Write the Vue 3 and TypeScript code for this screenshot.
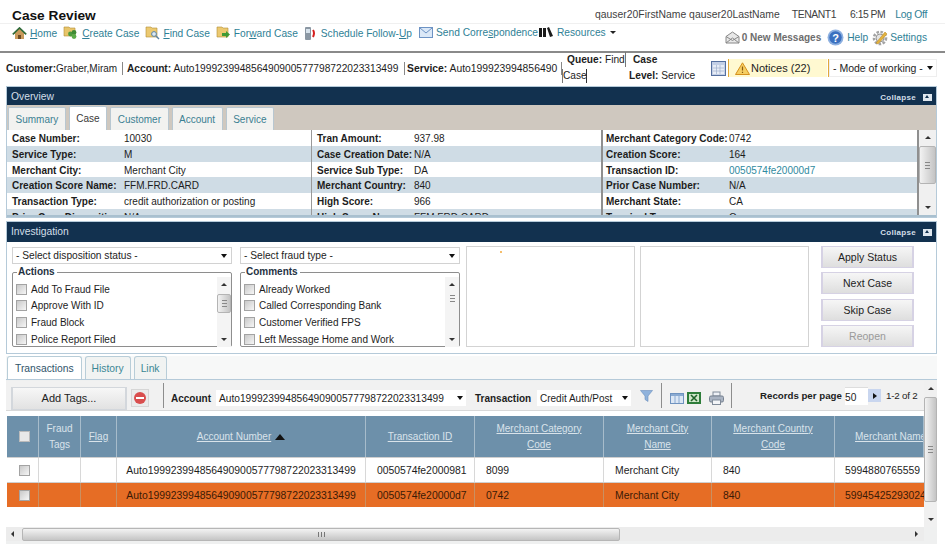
<script setup lang="ts">
const overview: [string, string, boolean?][][] = [
  [['Case Number:', '10030'], ['Tran Amount:', '937.98'], ['Merchant Category Code:', '0742']],
  [['Service Type:', 'M'], ['Case Creation Date:', 'N/A'], ['Creation Score:', '164']],
  [['Merchant City:', 'Merchant City'], ['Service Sub Type:', 'DA'], ['Transaction ID:', '0050574fe20000d7', true]],
  [['Creation Score Name:', 'FFM.FRD.CARD'], ['Merchant Country:', '840'], ['Prior Case Number:', 'N/A']],
  [['Transaction Type:', 'credit authorization or posting'], ['High Score:', '966'], ['Merchant State:', 'CA']],
  [['Prior Case Disposition:', 'N/A'], ['High Score Name:', 'FFM.FRD.CARD'], ['Terminal Type:', 'O']],
]
const tabs1 = ['Summary', 'Case', 'Customer', 'Account', 'Service']
const actions = ['Add To Fraud File', 'Approve With ID', 'Fraud Block', 'Police Report Filed']
const comments = ['Already Worked', 'Called Corresponding Bank', 'Customer Verified FPS', 'Left Message Home and Work']
const heads = [
  { t: 'Merchant Category', u: 'Code' },
  { t: 'Merchant City', u: 'Name' },
  { t: 'Merchant Country', u: 'Code' },
]
const rows = [
  { id: '0050574fe2000981', code: '8099', name: '5994880765559', picked: false },
  { id: '0050574fe20000d7', code: '0742', name: '59945425293024', picked: true },
]
const acct = 'Auto199923994856490900577798722023313499'
</script>

<template>
  <div class="page">
    <header class="top">
      <div class="title-row">
        <h1>Case Review</h1>
        <div class="user">
          <span>qauser20FirstName qauser20LastName</span>
          <span>TENANT1</span>
          <span>6:15 PM</span>
          <a>Log Off</a>
        </div>
      </div>
      <div class="nav-row">
        <nav class="nav">
          <a class="w-home"><svg width="15" height="13" viewBox="0 0 15 13"><path d="M7.500 1 1 7h2v5h9V7h2z" fill="#c99a5c"/><path d="M.8 7.300 7.500 1l6.700 6.300" fill="none" stroke="#2f6b3a" stroke-width="1.700"/><rect x="6" y="8" width="3" height="4" fill="#6b4a24"/></svg><span><u>H</u>ome</span></a>
          <a class="w-create"><svg width="15" height="14" viewBox="0 0 15 14"><path d="M1 1h5l1 1h5v8H1z" fill="#e8c56a" stroke="#b28d37" stroke-width=".6"/><circle cx="7.500" cy="8" r="2.400" fill="#4c9a3e"/><circle cx="11" cy="6.500" r="2.400" fill="#3f8a35"/><circle cx="11" cy="10.500" r="2.400" fill="#5bab48"/></svg><span><u>C</u>reate Case</span></a>
          <a class="w-find"><svg width="15" height="14" viewBox="0 0 15 14"><path d="M1 1h5l1 1h5v9H1z" fill="#ecc970" stroke="#b28d37" stroke-width=".6"/><circle cx="9" cy="8" r="2.400" fill="#dbe9f4" stroke="#5a83a6"/><path d="m11 10 3 3" stroke="#5a83a6" stroke-width="1.400"/></svg><span><u>F</u>ind Case</span></a>
          <a class="w-forward"><svg width="15" height="14" viewBox="0 0 15 14"><path d="M1 1h5l1 1h5v9H1z" fill="#ecc970" stroke="#b28d37" stroke-width=".6"/><path d="M6 7h4V5l4 3.500-4 3.500v-2H6z" fill="#3f9a35"/></svg><span>For<u>w</u>ard Case</span></a>
          <a class="w-sched"><svg width="14" height="15" viewBox="0 0 14 15"><rect x="1" y="1" width="6" height="13" rx="1" fill="#8b97a3"/><rect x="2" y="3" width="4" height="4" fill="#d8e3ec"/><path d="M9 4q2 3 0 7" fill="none" stroke="#d62020" stroke-width="2"/></svg><span>Schedule Follow-<u>U</u>p</span></a>
          <a class="w-send"><svg width="14" height="11" viewBox="0 0 14 11"><rect x=".5" y=".5" width="13" height="10" fill="#dbe8f7" stroke="#6d93c4"/><path d="m1 1 6 5 6-5" fill="none" stroke="#6d93c4"/></svg><span>Send Corre<u>s</u>pondence</span></a>
          <a class="w-res"><svg width="14" height="10" viewBox="0 0 14 10"><path d="M0 1h3v9H0zM4 1h3v9H4zM8 1l2-1 4 9-3 1z" fill="#1b1b1b"/></svg><span>Resources</span><i class="caret"></i></a>
        </nav>
        <div class="utils">
          <span class="msgs"><svg width="15" height="13" viewBox="0 0 15 13"><path d="M1 5.500 7.500 1 14 5.500V12H1z" fill="#e8e8e8" stroke="#888"/><path d="m1 12 6.500-5 6.500 5M1 5.500l6.500 4 6.500-4" fill="none" stroke="#888"/></svg>0 New Messages</span>
          <a class="help"><svg width="17" height="17" viewBox="0 0 17 17"><circle cx="8.500" cy="8.500" r="8" fill="#8db0e0"/><circle cx="8.500" cy="8.500" r="6.200" fill="#3a70c0"/><text x="8.500" y="12.500" text-anchor="middle" font-size="11" font-weight="700" fill="#fff">?</text></svg>Help</a>
          <a class="settings"><svg width="17" height="17" viewBox="0 0 17 17"><circle cx="8" cy="9" r="6" fill="none" stroke="#a3a3a3" stroke-width="2.600" stroke-dasharray="2.500 1.500"/><circle cx="8" cy="9" r="4" fill="#e2e2e2" stroke="#999"/><path d="m4 14 9-11 2 2-9 10z" fill="#e3b23f" stroke="#b5841e" stroke-width=".5"/></svg>Settings</a>
        </div>
      </div>
    </header>

    <section class="info">
      <div class="crumb c-a"><b>Customer:</b>Graber,Miram</div>
      <div class="crumb c-b"><b>Account:</b> {{ acct }}</div>
      <div class="crumb c-c"><b>Service:</b> Auto199923994856490</div>
      <div class="queue"><span class="q1"><b>Queue:</b> Find</span><span class="q2">Case</span></div>
      <div class="level"><b class="lc">Case</b><span><b>Level:</b> Service</span></div>
      <svg class="cal" width="15" height="15" viewBox="0 0 15 15"><rect x=".5" y=".5" width="14" height="14" fill="#c3cfe6" stroke="#56709f"/><rect x="2" y="4" width="11" height="9" fill="#e8edf6"/><path d="M2 7h11M2 10h11M5.500 4v9M9 4v9" stroke="#9fb0cf" stroke-width=".7"/></svg>
      <div class="notices"><svg width="15" height="13" viewBox="0 0 15 13"><path d="M7.500 .8 14.500 12.500H.5z" fill="#f6cf63" stroke="#d5901e"/><path d="M7.500 4.500v4M7.500 9.800v1.200" stroke="#8a5a10" stroke-width="1.200"/></svg>Notices (22)</div>
      <div class="mode"><span>- Mode of working -</span><i class="arrow"></i></div>
    </section>

    <section class="panel overview">
      <div class="phead"><span>Overview</span><span class="coll">Collapse<i class="collbtn"></i></span></div>
      <div class="tabbar">
        <a v-for="t in tabs1" :key="t" class="tab" :class="{ on: t === 'Case' }">{{ t }}</a>
      </div>
      <div class="ov-body">
        <div class="ov-table">
          <div v-for="(r, i) in overview" :key="i" class="ov-row" :class="{ alt: i % 2 === 1 }">
            <div v-for="(c, j) in r" :key="j" class="ov-cell" :class="'c' + j">
              <b>{{ c[0] }}</b><span :class="{ link: c[2] }">{{ c[1] }}</span>
            </div>
          </div>
        </div>
        <div class="vbar ov-bar"><i class="up"></i><div class="thumb"><em></em></div><i class="down"></i></div>
      </div>
    </section>

    <section class="panel invest">
      <div class="phead"><span>Investigation</span><span class="coll">Collapse<i class="collbtn"></i></span></div>
      <div class="inv-body">
        <div class="inv-col">
          <div class="sel"><span>- Select disposition status -</span><i class="arrow"></i></div>
          <fieldset class="fs">
            <legend>Actions</legend>
            <div class="fs-list">
              <label v-for="a in actions" :key="a"><i class="cb"></i>{{ a }}</label>
            </div>
            <div class="vbar"><i class="up"></i><div class="thumb"><em></em></div><i class="down"></i></div>
          </fieldset>
        </div>
        <div class="inv-col">
          <div class="sel"><span>- Select fraud type -</span><i class="arrow"></i></div>
          <fieldset class="fs">
            <legend>Comments</legend>
            <div class="fs-list">
              <label v-for="a in comments" :key="a"><i class="cb"></i>{{ a }}</label>
            </div>
            <div class="vbar small"><i class="up"></i><div class="thumb"><em></em></div><i class="down"></i></div>
          </fieldset>
        </div>
        <div class="box first"><i class="dot"></i></div>
        <div class="box"></div>
        <div class="btns">
          <button>Apply Status</button>
          <button>Next Case</button>
          <button>Skip Case</button>
          <button class="off">Reopen</button>
        </div>
      </div>
    </section>

    <section class="lower">
      <div class="tabs2">
        <a class="tab2 on">Transactions</a>
        <a class="tab2">History</a>
        <a class="tab2">Link</a>
      </div>
      <div class="grid-wrap">
        <div class="grid-main">
          <div class="toolbar">
            <button class="tags">Add Tags...</button>
            <span class="minus"><i></i></span>
            <span class="vsep"></span>
            <b class="tl1">Account</b>
            <div class="tsel a"><span>{{ acct }}</span><i class="arrow"></i></div>
            <b class="tl2">Transaction</b>
            <div class="tsel t"><span>Credit Auth/Post</span><i class="arrow"></i></div>
            <svg class="filter" width="13" height="12" viewBox="0 0 13 12"><path d="M.5.500h12L8 6v5.500L5 9.500V6z" fill="#8fb2dc" stroke="#6a8fbd" stroke-width=".6"/></svg>
            <span class="vsep s2"></span>
            <svg class="i-grid" width="14" height="11" viewBox="0 0 14 11"><rect x=".5" y=".5" width="13" height="10" fill="#dce7f5" stroke="#6f93c0"/><rect x="1" y="1" width="12" height="2" fill="#8aaad2"/><path d="M5 3v7M9 3v7" stroke="#8aaad2"/></svg>
            <svg class="i-xl" width="14" height="12" viewBox="0 0 14 12"><rect width="14" height="12" fill="#2e7d3a"/><rect x="2" y="2" width="10" height="8" fill="#cfe6c9"/><path d="m4 3 6 6M10 3 4 9" stroke="#1e6329" stroke-width="1.600"/></svg>
            <svg class="i-pr" width="15" height="14" viewBox="0 0 15 14"><rect x="4" y="1" width="7" height="4" fill="#eef1f6" stroke="#808b99"/><rect x=".5" y="5" width="14" height="6" rx="1.500" fill="#a9b3c2" stroke="#768190"/><rect x="3.500" y="9" width="8" height="4.500" fill="#f3f5f8" stroke="#808b99"/></svg>
            <span class="vsep s3"></span>
            <b class="rpp">Records per page</b>
            <span class="rpp-in">50</span>
            <span class="next"><i></i></span>
            <span class="count">1-2 of 2</span>
          </div>
          <div class="tbl">
            <div class="tr th">
              <div class="cell w-a"><i class="cb head"></i></div>
              <div class="cell w-b">Fraud<br>Tags</div>
              <div class="cell w-c"><u>Flag</u></div>
              <div class="cell w-d"><u>Account Number</u><i class="sort"></i></div>
              <div class="cell w-e"><u>Transaction ID</u></div>
              <div v-for="(h, i) in heads" :key="h.t" class="cell" :class="'w-' + 'fgh'[i]"><span><u>{{ h.t }}</u><br><u>{{ h.u }}</u></span></div>
              <div class="cell w-i"><u>Merchant Name</u></div>
            </div>
            <div v-for="r in rows" :key="r.id" class="tr td" :class="{ picked: r.picked }">
              <div class="cell w-a"><i class="cb"></i></div>
              <div class="cell w-b"></div>
              <div class="cell w-c"></div>
              <div class="cell w-d">{{ acct }}</div>
              <div class="cell w-e lft">{{ r.id }}</div>
              <div class="cell w-f lft">{{ r.code }}</div>
              <div class="cell w-g lft">Merchant City</div>
              <div class="cell w-h lft">840</div>
              <div class="cell w-i lft">{{ r.name }}</div>
            </div>
          </div>
          <div class="hbar"><i class="left"></i><div class="hthumb"><em></em></div><i class="right"></i></div>
        </div>
        <div class="vbar main"><i class="up"></i><div class="thumb"><em></em></div><i class="down"></i></div>
      </div>
    </section>
  </div>
</template>

<style>
html, body { margin: 0; background: #fff; }
</style>

<style scoped>
.page { width: 946px; height: 544px; overflow: hidden; background: #fff; font-family: "Liberation Sans", Arial, sans-serif; font-size: 10px; color: #1d1d1d; display: flex; flex-direction: column; }
a { color: #2f7f96; }
.top { height: 53px; box-sizing: border-box; border-bottom: 2px solid #8a8a8a; margin-right: 1px; flex: none; }
.title-row { height: 24px; display: flex; justify-content: space-between; align-items: flex-end; padding-left: 12px; border-bottom: 1px solid #f0f0f0; box-sizing: border-box; }
h1 { margin: 0 0 -2px; font-size: 13.700px; line-height: 18px; color: #111; }
.user { display: flex; font-size: 10.400px; color: #3f3f3f; line-height: 16px; padding-right: 18px; }
.user span:nth-child(2) { margin-left: 12px; letter-spacing: -.45px; }
.user span:nth-child(3) { margin-left: 14px; letter-spacing: -.5px; }
.user a { margin-left: 10px; letter-spacing: -.3px; }
.nav-row { display: flex; justify-content: space-between; height: 27px; }
.nav { display: flex; align-items: flex-start; padding: 1px 0 0 12px; font-size: 10.200px; }
.nav a { display: flex; align-items: center; gap: 3px; height: 16px; white-space: nowrap; }
.nav a svg { flex: none; }
.nav a.w-create { margin-left: 6px; gap: 4px; } .nav a.w-find { margin-left: 6px; } .nav a.w-forward { margin-left: 6px; }
.nav a.w-sched { margin-left: 6px; gap: 3px; } .nav a.w-send { margin-left: 7px; gap: 3px; margin-top: -1px; }
.nav a.w-res { margin-left: 1px; gap: 4px; margin-top: -1px; }
.caret { width: 0; height: 0; border: 3px solid transparent; border-top: 3px solid #222; border-bottom: 0; margin-left: 0; }
.utils { display: flex; align-items: center; height: 25px; padding: 2px 18px 0 0; font-size: 10.200px; box-sizing: border-box; }
.msgs, .help, .settings { display: flex; align-items: center; gap: 2px; }
.msgs { color: #6d6d6d; font-weight: 700; font-size: 10px; }
.help { margin-left: 6px; gap: 3px; } .settings { margin-left: 4px; gap: 1px; }
.info { height: 33px; box-sizing: border-box; padding: 0 0 3px 6px; display: flex; align-items: center; font-size: 10.200px; white-space: nowrap; flex: none; }
.crumb { box-sizing: border-box; height: 13px; line-height: 13px; flex: none; }
.c-a { width: 116px; font-size: 10px; }
.c-b { width: 282px; border-left: 1px solid #888; padding-left: 4px; }
.c-c { width: 158px; border-left: 1px solid #888; border-right: 1px solid #888; padding-left: 2px; font-size: 10.350px; }
.queue { width: 67px; height: 32px; display: flex; flex-direction: column; flex: none; }
.q1 { padding-left: 5px; border-right: 1px solid #777; width: 64px; box-sizing: border-box; height: 15px; line-height: 15px; }
.q2 { border-left: 1px solid #777; border-right: 1px solid #333; width: 25px; box-sizing: border-box; line-height: 14px; margin-top: 2px; }
.level { width: 82px; height: 32px; display: flex; flex-direction: column; line-height: 16px; flex: none; }
.lc { padding-left: 4px; }
.cal { flex: none; }
.notices { margin-left: 2px; width: 99px; height: 18px; box-sizing: border-box; border-left: 1px solid #e2a93b; background: #fff9d1; display: flex; align-items: center; gap: 1px; padding-left: 6px; font-size: 11px; flex: none; }
.mode { margin-left: 1px; width: 109px; height: 18px; box-sizing: border-box; border-left: 1px solid #e2a93b; background: #fff; display: flex; align-items: center; justify-content: space-between; padding: 0 4px; box-shadow: inset 0 0 0 1px #eee; flex: none; font-size: 10.500px; }
.arrow { width: 0; height: 0; border: 3.500px solid transparent; border-top: 4px solid #111; border-bottom: 0; flex: none; }
.panel { margin: 0 9px 0 6px; border: 1px solid #b5cad9; flex: none; background: #fff; box-sizing: border-box; }
.overview { height: 132px; }
.invest { height: 133px; margin-top: 3px; }
.phead { height: 18px; background: #12314f; color: #d3dfe8; display: flex; align-items: center; justify-content: space-between; padding: 0 4px; box-sizing: border-box; font-size: 10.300px; }
.invest .phead { height: 20px; padding-bottom: 2px; }
.coll { display: flex; align-items: center; font-size: 8px; font-weight: 700; letter-spacing: .3px; margin-top: 3px; }
.collbtn { width: 9px; height: 7px; background: #dfe7ee; margin-left: 7px; position: relative; }
.collbtn::after { content: ""; position: absolute; left: 2px; top: 1px; border: 2.500px solid transparent; border-bottom: 3px solid #12314f; border-top: 0; }
.tabbar { height: 25px; background: #cfc8bf; display: flex; align-items: flex-end; padding-left: 1px; gap: 3px; box-sizing: border-box; }
.tab { height: 23px; box-sizing: border-box; padding: 0 6.500px; background: #f2f2f0; border: 1px solid #b8c7d1; border-bottom: 0; display: flex; align-items: center; font-size: 10px; color: #3b7f92; border-radius: 2px 2px 0 0; }
.tab.on { background: #fff; color: #3a3a3a; height: 24px; }
.ov-body { display: flex; height: 87px; overflow: hidden; border-bottom: 2px solid #a9c0cf; box-sizing: border-box; }
.ov-table { flex: 1; overflow: hidden; }
.ov-row { height: 15.750px; display: grid; grid-template-columns: 304px 290px 1fr; }
.ov-row.alt { background: #cfdce5; }
.ov-cell { display: flex; align-items: center; line-height: 15px; white-space: nowrap; padding: 1px 0 0 5px; box-sizing: border-box; }
.ov-cell b { display: inline-block; flex: none; }
.c0 b { width: 112px; } .c1 { border-left: 1px solid #999; padding-left: 5px; } .c1 b { width: 97px; } .c2 { border-left: 2px solid #8f8f8f; padding-left: 3px; } .c2 b { width: 123px; }
.link { color: #2f8aa0; }
.vbar { width: 14px; background: #f0f0f0; display: flex; flex-direction: column; align-items: center; flex: none; position: relative; }
.ov-bar { width: 19px; border-left: 2px solid #8f8f8f; box-sizing: border-box; height: 85px; }
.up, .down { display: block; height: 16px; width: 100%; position: relative; flex: none; }
.up::after { content: ""; position: absolute; left: 50%; margin-left: -3px; top: 6px; border: 3px solid transparent; border-bottom: 3px solid #333; border-top: 0; }
.down::after { content: ""; position: absolute; left: 50%; margin-left: -3px; bottom: 6px; border: 3px solid transparent; border-top: 3px solid #333; border-bottom: 0; }
.thumb { flex: none; width: 100%; height: 38px; background: linear-gradient(90deg, #f2f2f2, #c4c4c4); border: 1px solid #b4b4b4; box-sizing: border-box; border-radius: 2px; display: flex; align-items: center; justify-content: center; }
.thumb em { width: 5px; height: 5px; border-top: 1px solid #888; border-bottom: 1px solid #888; position: relative; display: block; }
.thumb em::after { content: ""; position: absolute; left: 0; right: 0; top: 2px; height: 1px; background: #888; }
.down { margin-top: auto; }
.inv-body { display: flex; height: 111px; box-sizing: border-box; padding: 5px 0 0 5px; background: #fff; }
.inv-col { width: 220px; margin-right: 8px; display: flex; flex-direction: column; flex: none; }
.inv-col + .inv-col { margin-right: 6px; }
.sel { height: 17px; border: 1px solid #d2d2d2; box-sizing: border-box; display: flex; align-items: center; justify-content: space-between; padding: 0 4px 0 3px; font-size: 10.200px; flex: none; }
.fs { margin: 3px 0 0; padding: 0 0 0 3px; border: 1px solid #8e8e8e; border-radius: 2px; height: 80px; box-sizing: border-box; display: flex; min-width: 0; flex: none; }
.fs legend { font-weight: 700; padding: 0 2px 0 1px; margin-left: 1px; line-height: 10px; font-size: 10px; color: #1f3243; }
.fs-list { flex: 1; display: flex; flex-direction: column; padding-top: 4px; }
.fs-list label { height: 16.600px; display: flex; align-items: center; gap: 4px; white-space: nowrap; flex: none; }
.cb { width: 11px; height: 11px; box-sizing: border-box; border: 1px solid #a3a3a3; background: linear-gradient(135deg, #c9c9c9, #f6f6f6); display: block; flex: none; }
.fs .vbar { width: 14px; background: #f4f4f4; }
.fs .thumb { height: 19px; }
.fs .up { height: 17px; }
.fs .down { height: 14px; }
.fs .vbar.small .thumb { height: 9px; background: #f4f4f4; border: 0; }
.box { width: 169px; height: 101px; border: 1px solid #d3d3d3; box-sizing: border-box; margin: -1px 0 0 5px; position: relative; flex: none; }
.box.first { margin-left: 0; }
.dot { position: absolute; left: 33px; top: 4px; width: 2px; height: 2px; background: #f2a93b; border-radius: 1px; }
.btns { margin: -1px 0 0 12px; width: 93px; display: flex; flex-direction: column; gap: 4.400px; flex: none; }
.btns button { height: 22px; padding: 0; border: solid #d6d2e4; border-width: 1px 2px; background: linear-gradient(#f6f6f6, #dedede); font: 10.500px "Liberation Sans", Arial, sans-serif; color: #222; }
.btns .off { color: #9a9a9a; }
.lower { flex: 1; background: #f7f8f8; margin: 2px 9px 0 6px; display: flex; flex-direction: column; min-height: 0; }
.tabs2 { height: 24px; flex: none; display: flex; align-items: flex-end; gap: 3px; padding-left: 1px; border-bottom: 1px solid #b5cad9; box-sizing: border-box; }
.tab2 { height: 23px; box-sizing: border-box; padding: 0 6px; background: #f1f3f2; border: 1px solid #b8cdd8; border-bottom: 0; display: flex; align-items: center; font-size: 10.300px; color: #3b8795; border-radius: 3px 3px 0 0; }
.tab2.on { color: #30546a; background: #fff; padding: 0 7px; }
.grid-wrap { flex: 1; display: flex; padding: 1px 0 3px 0; min-height: 0; background: #eff0f0; }
.grid-main { flex: 1; min-width: 0; display: flex; flex-direction: column; background: #fff; }
.toolbar { height: 30px; flex: none; display: flex; align-items: center; background: #f1f1f1; border-bottom: 1px solid #d8d8d8; box-sizing: border-box; padding: 5px 0 0 5px; font-size: 10.200px; white-space: nowrap; }
.tags { flex: none; width: 116px; height: 23px; padding: 0; border: solid #d3d7dc; border-width: 1px 2px; background: linear-gradient(#f7f7f7, #e2e2e2); font: 11px "Liberation Sans", Arial, sans-serif; color: #222; }
.minus { width: 18px; height: 18px; box-sizing: border-box; margin-left: 4px; background: #ebebeb; border: 1px solid #d6d6d6; display: flex; align-items: center; justify-content: center; flex: none; }
.minus i { width: 12px; height: 12px; border-radius: 50%; background: #d94e4e; position: relative; display: block; }
.minus i::after { content: ""; position: absolute; left: 2px; right: 2px; top: 5px; height: 2px; background: #fff; }
.vsep { width: 1px; height: 25px; background: #8d8d8d; margin: -5px 0 0 14px; flex: none; }
.tl1 { margin-left: 7px; font-size: 10px; flex: none; width: 40px; }
.tsel { background: #fff; height: 16px; display: flex; align-items: center; justify-content: space-between; padding: 0 3px; box-sizing: border-box; flex: none; }
.tsel.a { width: 250px; margin-left: 5px; }
.tl2 { margin-left: 9px; font-size: 10px; flex: none; width: 56px; }
.tsel.t { width: 94px; margin-left: 6px; font-size: 10px; }
.filter { margin: -5px 0 0 9px; flex: none; }
.s2 { margin-left: 8px; }
.i-grid { margin-left: 8px; flex: none; } .i-xl { margin-left: 3px; flex: none; } .i-pr { margin-left: 8px; flex: none; }
.s3 { margin-left: 7px; }
.rpp { margin: -5px 0 0 28px; font-size: 9.700px; flex: none; width: 84px; }
.rpp-in { width: 23px; height: 18px; background: #fff; line-height: 19px; box-sizing: border-box; margin: -5px 0 0 1px; border-top: 1px solid #ddd; flex: none; }
.next { width: 13px; height: 13px; background: #c9d6ef; display: flex; align-items: center; justify-content: center; margin: -5px 0 0 0; flex: none; }
.next i { border: 3.500px solid transparent; border-left: 4px solid #111; border-right: 0; }
.count { margin: -5px 0 0 5px; font-size: 9.800px; letter-spacing: -.2px; flex: none; }
.tbl { margin: 5px 0 0 1px; flex: none; overflow: hidden; }
.tr { display: flex; width: 917px; }
.cell { box-sizing: border-box; display: flex; align-items: center; justify-content: center; text-align: center; flex: none; border-right: 1px solid #d8d8d8; white-space: nowrap; }
.th { height: 41px; background: #6d90aa; color: #d9e3ea; line-height: 16px; font-size: 10px; }
.th .cell { border-right: 1px solid #a7bccb; }
.td { height: 25px; background: #fff; border-top: 1px solid #cfcfcf; box-sizing: border-box; font-size: 10.400px; }
.td.picked { background: #e66d25; color: #3a1a06; }
.td.picked .cell { border-right-color: #c99062; }
.lft { justify-content: flex-start; padding-left: 11px; }
.w-a { width: 32px; padding-left: 3px; } .w-b { width: 42px; } .w-c { width: 36px; } .w-d { width: 249px; } .w-e { width: 109px; }
.w-f { width: 129px; } .w-g { width: 108px; } .w-h { width: 123px; } .w-i { width: 89px; overflow: hidden; justify-content: flex-start; padding-left: 10px; border-right: 0; }
.th .w-i { padding-left: 20px; }
.sort { border: 5px solid transparent; border-bottom: 6px solid #111; border-top: 0; margin-left: 4px; }
.cb.head { background: #e8e8e8; border-color: #bbb; }
.hbar { margin-top: auto; height: 14px; display: flex; align-items: center; background: #ececec; position: relative; flex: none; }
.left { width: 16px; flex: none; position: relative; height: 14px; }
.left::after { content: ""; position: absolute; left: 5px; top: 4px; border: 3px solid transparent; border-right: 3px solid #333; border-left: 0; }
.right { width: 15px; position: absolute; right: 0; height: 14px; }
.right::after { content: ""; position: absolute; left: 6px; top: 4px; border: 3px solid transparent; border-left: 3px solid #333; border-right: 0; }
.hthumb { width: 598px; height: 13px; border: 1px solid #b6b6b6; box-sizing: border-box; background: linear-gradient(#f3f3f3, #c5c5c5); border-radius: 2px; display: flex; align-items: center; justify-content: center; }
.hthumb em { width: 5px; height: 5px; border-left: 1px solid #777; border-right: 1px solid #777; position: relative; display: block; }
.hthumb em::after { content: ""; position: absolute; top: 0; bottom: 0; left: 2px; width: 1px; background: #777; }
.vbar.main { width: 13px; margin-bottom: 14px; }
.vbar.main .thumb { height: 105px; }
</style>
